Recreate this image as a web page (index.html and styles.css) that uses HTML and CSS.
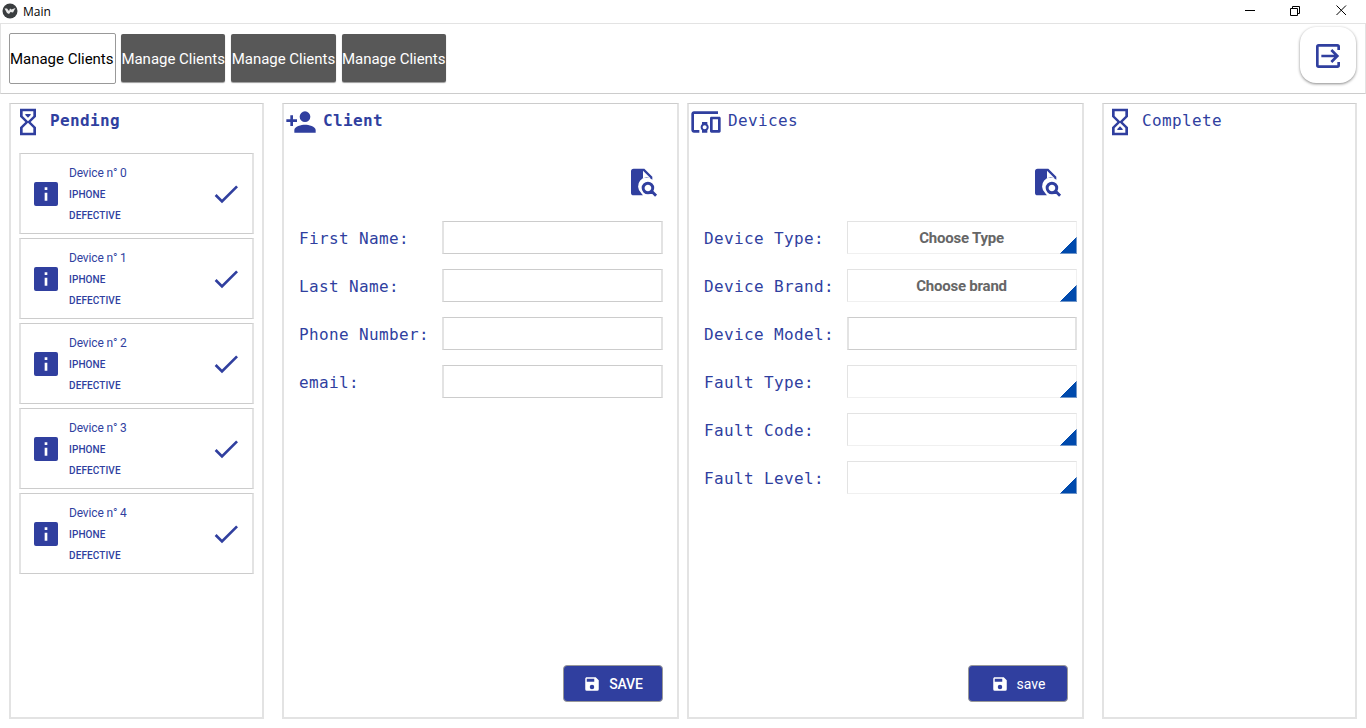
FILE: index.html
```html
<!DOCTYPE html>
<html lang="en">
<head>
<meta charset="utf-8">
<title>Main</title>
<link rel="stylesheet" href="styles.css">
</head>
<body>
<svg class="defs" width="0" height="0">
  <symbol id="i-info" viewBox="0 0 24 24"><path fill-rule="evenodd" d="M4.500,3H19.500A1.500,1.500 0 0 1 21,4.500V19.500A1.500,1.500 0 0 1 19.500,21H4.500A1.500,1.500 0 0 1 3,19.500V4.500A1.500,1.500 0 0 1 4.500,3ZM11,7V9H13V7ZM11,11V17H13V11Z"/></symbol>
  <symbol id="i-check" viewBox="0 0 24 24"><path d="M21,7L9,19L3.500,13.500L4.910,12.090L9,16.170L19.590,5.590Z"/></symbol>
  <symbol id="i-search" viewBox="0 0 24 24"><path fill-rule="evenodd" d="M5,2H13L19,8V10.300A6.400,6.400 0 0 0 10.500,20Q11,21 12,22H5Q3,22 3,20V4Q3,2 5,2ZM12,3.500V9H17.500Z"/><path fill="none" stroke="currentColor" stroke-width="2.200" d="M18.500,19L21.800,22.300M19.300,16.500A3.600,3.600 0 1 1 12.100,16.500A3.600,3.600 0 1 1 19.300,16.500"/></symbol>
  <symbol id="i-save" viewBox="0 0 24 24"><path d="M15,9H5V5H15M12,19A3,3 0 0,1 9,16A3,3 0 0,1 12,13A3,3 0 0,1 15,16A3,3 0 0,1 12,19M17,3H5C3.890,3 3,3.900 3,5V19A2,2 0 0,0 5,21H19A2,2 0 0,0 21,19V7L17,3Z"/></symbol>
</svg>
<header class="titlebar">
  <svg class="logo" viewBox="0 0 16 16"><circle cx="8" cy="8" r="7.500" fill="#3a3d3f"/><path d="M2.500 5.500L5 5.500L7 8L8 5.500L9.500 6.500L13.500 5L11 9.500L8.500 9L7 11L5 10Z" fill="#e8e8e8"/></svg>
  <span class="app-name">Main</span>
  <svg class="window-controls" viewBox="0 0 104 14" fill="none" stroke="#000"><path d="M0 7.500H10M45.500 5.500H52.500V12.500H45.500ZM47.500 5.500V3.500H54.500V10.500H52.500M91.500 2.500L101 12M101 2.500L91.500 12"/></svg>
</header>
<nav class="toolbar">
  <button class="tab current">Manage Clients</button>
  <button class="tab">Manage Clients</button>
  <button class="tab">Manage Clients</button>
  <button class="tab">Manage Clients</button>
  <button class="exit"><svg class="icon" viewBox="0 0 24 24" fill="none" stroke="currentColor" stroke-width="2"><path d="M20 7.500V5Q20 4 19 4H5Q4 4 4 5V19Q4 20 5 20H19Q20 20 20 19V16.500M7 12H18.500M14.500 7.500L19 12L14.500 16.500"/></svg></button>
</nav>
<main class="board">
  <section class="panel pending">
    <h2 class="heading strong"><svg class="icon" viewBox="0 0 24 24"><path d="M6,2H18V8L14,12L18,16V22H6V16L10,12L6,8V2M16,16.500L12,12.500L8,16.500V20H16V16.500M12,11.500L16,7.500V4H8V7.500L12,11.500M10,6H14V6.750L12,8.750L10,6.750V6Z"/></svg>Pending</h2>
    <div class="cards">
      <article class="card"><svg class="icon"><use href="#i-info"/></svg><div class="info"><b>Device n° 0</b><span>IPHONE</span><span>DEFECTIVE</span></div><svg class="icon"><use href="#i-check"/></svg></article>
      <article class="card"><svg class="icon"><use href="#i-info"/></svg><div class="info"><b>Device n° 1</b><span>IPHONE</span><span>DEFECTIVE</span></div><svg class="icon"><use href="#i-check"/></svg></article>
      <article class="card"><svg class="icon"><use href="#i-info"/></svg><div class="info"><b>Device n° 2</b><span>IPHONE</span><span>DEFECTIVE</span></div><svg class="icon"><use href="#i-check"/></svg></article>
      <article class="card"><svg class="icon"><use href="#i-info"/></svg><div class="info"><b>Device n° 3</b><span>IPHONE</span><span>DEFECTIVE</span></div><svg class="icon"><use href="#i-check"/></svg></article>
      <article class="card"><svg class="icon"><use href="#i-info"/></svg><div class="info"><b>Device n° 4</b><span>IPHONE</span><span>DEFECTIVE</span></div><svg class="icon"><use href="#i-check"/></svg></article>
    </div>
  </section>
  <section class="panel client">
    <h2 class="heading strong"><svg class="icon" viewBox="0 0 24 24"><path d="M15,14C12.330,14 7,15.330 7,18V20H23V18C23,15.330 17.670,14 15,14M6,10V7H4V10H1V12H4V15H6V12H9V10M15,12A4,4 0 0,0 19,8A4,4 0 0,0 15,4A4,4 0 0,0 11,8A4,4 0 0,0 15,12Z"/></svg>Client</h2>
    <svg class="icon lookup"><use href="#i-search"/></svg>
    <div class="form">
      <span class="label">First Name:</span><span class="field"></span>
      <span class="label">Last Name:</span><span class="field"></span>
      <span class="label">Phone Number:</span><span class="field"></span>
      <span class="label">email:</span><span class="field"></span>
    </div>
    <button class="save upper"><svg class="icon"><use href="#i-save"/></svg>SAVE</button>
  </section>
  <section class="panel devices">
    <h2 class="heading"><svg class="icon" viewBox="0 0 24 24"><path d="M3 6H21V4H3C1.900 4 1 4.900 1 6V18C1 19.100 1.900 20 3 20H7V18H3V6M13 12H9V13.780C8.390 14.330 8 15.110 8 16C8 16.890 8.390 17.670 9 18.220V20H13V18.220C13.610 17.670 14 16.880 14 16S13.610 14.330 13 13.780V12M11 17.500C10.170 17.500 9.500 16.830 9.500 16S10.170 14.500 11 14.500 12.500 15.170 12.500 16 11.830 17.500 11 17.500M22 8H16C15.500 8 15 8.500 15 9V19C15 19.500 15.500 20 16 20H22C22.500 20 23 19.500 23 19V9C23 8.500 22.500 8 22 8M21 18H17V10H21V18Z"/></svg>Devices</h2>
    <svg class="icon lookup"><use href="#i-search"/></svg>
    <div class="form">
      <span class="label">Device Type:</span><span class="field choice">Choose Type</span>
      <span class="label">Device Brand:</span><span class="field choice">Choose brand</span>
      <span class="label">Device Model:</span><span class="field"></span>
      <span class="label">Fault Type:</span><span class="field choice"></span>
      <span class="label">Fault Code:</span><span class="field choice"></span>
      <span class="label">Fault Level:</span><span class="field choice"></span>
    </div>
    <button class="save"><svg class="icon"><use href="#i-save"/></svg>save</button>
  </section>
  <section class="panel complete">
    <h2 class="heading"><svg class="icon" viewBox="0 0 24 24"><path d="M6,2H18V8L14,12L18,16V22H6V16L10,12L6,8V2M16,16.500L12,12.500L8,16.500V20H16V16.500M12,11.500L16,7.500V4H8V7.500L12,11.500M10,18H14V17.250L12,15.250L10,17.250V18Z"/></svg>Complete</h2>
  </section>
</main>
</body>
</html>
```
FILE: styles.css
```css
* { box-sizing: border-box; }
body { margin: 0; width: 1366px; height: 728px; overflow: hidden; background: #fff; color: #303f9f; font-family: Roboto, sans-serif; }
button { font-family: inherit; padding: 0; border: 0; }
.defs { display: none; }
.icon { width: 32px; height: 32px; flex: none; fill: currentColor; }
.titlebar { display: flex; align-items: center; height: 23px; padding: 0 17px 0 2px; }
.logo { width: 16px; height: 16px; margin-top: -1px; }
.app-name { flex: 1; margin-left: 5px; color: #000; font: 12px "Open Sans", sans-serif; }
.window-controls { width: 104px; height: 14px; margin-top: -3px; }
.toolbar { display: flex; gap: 6px; height: 71px; padding: 10px 9px 0 8px; border: 1px solid #e3e3e3; border-bottom-color: #ccc; }
.tab { width: 104.300px; height: 48px; padding-top: 2px; border-radius: 2px; background: #585858; color: #fff; font-size: 15px; letter-spacing: -.020px; white-space: nowrap; box-shadow: 0 1px 1px #999; }
.tab.current { width: 107px; height: 51px; margin: -1px -1px 0 0; padding: 0 2px 0 0; border: 1px solid #999; background: #fff; color: #000; box-shadow: none; }
.toolbar .exit { display: flex; align-items: center; justify-content: center; width: 56px; height: 56px; margin: -7px 0 0 auto; padding-top: 2px; border-radius: 16px; color: #303f9f; background: #fff; box-shadow: 0 1px 3px #888; }
.exit .icon { fill: none; }
.board { display: flex; height: 616px; margin: 9px 0 0 9px; }
.panel { display: flex; flex-direction: column; border: 2px solid #e3e3e3; border-top: 1px solid #ccc; }
.pending, .complete { width: 255px; }
.client, .devices { width: 397px; }
.client { margin: 0 8px 0 18px; }
.complete { margin-left: 18px; }
.heading { display: flex; align-items: center; gap: 6px; height: 33px; margin: 0; padding-left: 1px; font: 16px/30px "DejaVu Sans Mono", monospace; letter-spacing: .370px; }
.complete .heading { padding-left: 0; }
.heading .icon { margin-top: 3px; }
.strong { font-weight: bold; }
.cards { display: flex; flex-direction: column; gap: 4px; padding: 16px 8px 0; }
.card { display: flex; align-items: center; height: 81px; padding: 0 10px 0 9px; border: 1px solid #ccc; border-width: 1px 2px; border-color: #ccc #e3e3e3; }
.info { flex: 1; display: flex; flex-direction: column; margin-left: 7px; padding-top: 2px; font-size: 10px; line-height: 21px; }
.info b { font-size: 12px; font-weight: 400; letter-spacing: -.150px; }
.info span { font-weight: 500; letter-spacing: .100px; }
.lookup { margin: 29px 18px 23px auto; }
.devices .lookup { margin-right: 19px; }
.form { display: grid; grid-template-columns: 143px 1fr; row-gap: 15px; padding: 0 14px 0 15px; }
.devices .form { padding-right: 5px; }
.label { font: 16px/36px "DejaVu Sans Mono", monospace; letter-spacing: .370px; height: 33px; white-space: nowrap; }
.field { height: 33px; border: 1px solid #ccc; border-width: 1px 2px; border-color: #ccc #e3e3e3; text-align: center; color: #666; font-size: 15px; line-height: 33px; font-weight: 700; letter-spacing: -.220px; }
.choice { padding-right: 1px; border: 1px solid #e3e3e3; background: linear-gradient(135deg, transparent 50%, #004aad 50%) right bottom / 18px 17px no-repeat border-box; border-bottom-color: #e3e3e380; border-right-color: #e3e3e380; }
.save { display: flex; align-items: center; justify-content: center; gap: 8px; width: 100px; height: 37px; margin: auto 14px 15px auto; border: 1px solid #999; border-radius: 4px; background: #303f9f; color: #fff; font-size: 14px; }
.save .icon { width: 18px; height: 18px; }
.upper { font-weight: 500; letter-spacing: -.150px; }
```
